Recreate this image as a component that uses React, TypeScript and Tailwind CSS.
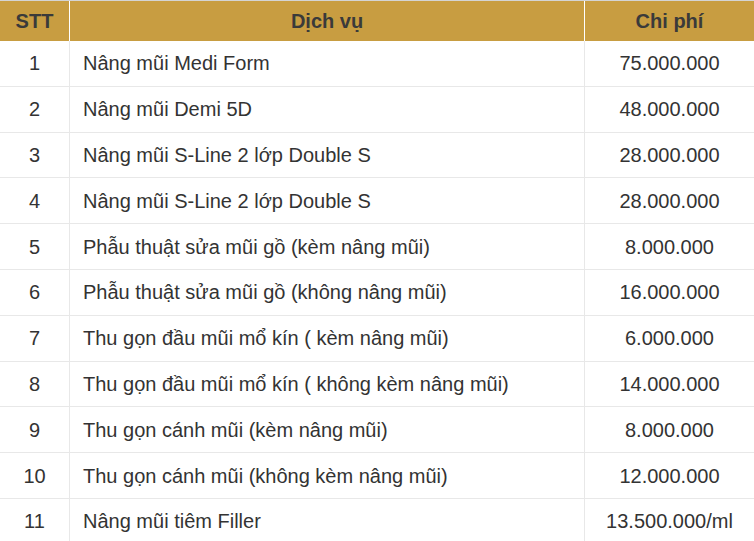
import React from "react";

const rows: [string, string, string][] = [
  ["1", "Nâng mũi Medi Form", "75.000.000"],
  ["2", "Nâng mũi Demi 5D", "48.000.000"],
  ["3", "Nâng mũi S-Line 2 lớp Double S", "28.000.000"],
  ["4", "Nâng mũi S-Line 2 lớp Double S", "28.000.000"],
  ["5", "Phẫu thuật sửa mũi gồ (kèm nâng mũi)", "8.000.000"],
  ["6", "Phẫu thuật sửa mũi gồ (không nâng mũi)", "16.000.000"],
  ["7", "Thu gọn đầu mũi mổ kín ( kèm nâng mũi)", "6.000.000"],
  ["8", "Thu gọn đầu mũi mổ kín ( không kèm nâng mũi)", "14.000.000"],
  ["9", "Thu gọn cánh mũi (kèm nâng mũi)", "8.000.000"],
  ["10", "Thu gọn cánh mũi (không kèm nâng mũi)", "12.000.000"],
  ["11", "Nâng mũi tiêm Filler", "13.500.000/ml"],
];

export default function App() {
  return (
    <div
      className="w-[754px] h-[541px] overflow-hidden bg-white text-[#333333] text-[20px] leading-none"
      style={{ fontFamily: '"Liberation Sans", Arial, sans-serif' }}
    >
      <div className="grid grid-cols-[70px_515px_169px] h-[41px] border-t border-[#d4d4d4] bg-[#c89d41] font-bold text-[#3a3a3a]">
        <div className="flex items-center justify-center border-r border-white">STT</div>
        <div className="flex items-center justify-center border-r border-white">Dịch vụ</div>
        <div className="flex items-center justify-center">Chi phí</div>
      </div>
      {rows.map(([n, s, p]) => (
        <div
          key={n}
          className="grid grid-cols-[70px_515px_169px] h-[45.8px] border-b border-[#e8e8e8]"
        >
          <div className="flex items-center justify-center border-r border-[#e8e8e8]">{n}</div>
          <div className="flex items-center pl-[13px] border-r border-[#e8e8e8]">{s}</div>
          <div className="flex items-center justify-center">{p}</div>
        </div>
      ))}
    </div>
  );
}
